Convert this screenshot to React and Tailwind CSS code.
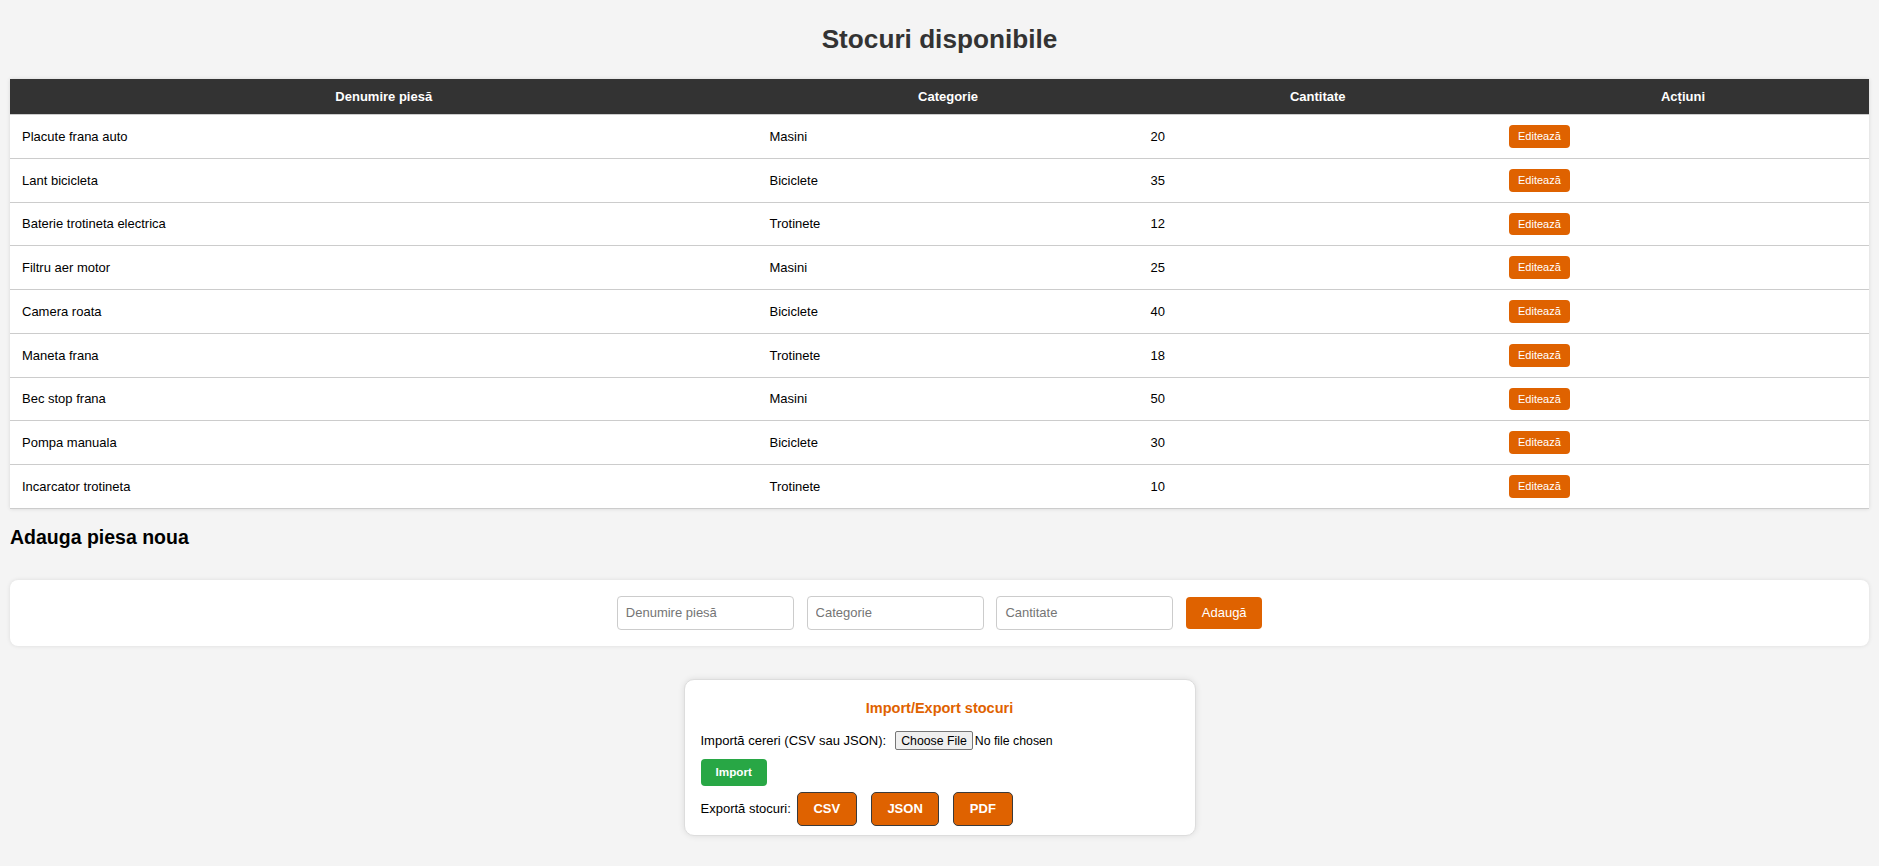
import React from 'react';

const stocuri = [
  { nume: 'Placute frana auto', categorie: 'Masini', cantitate: 20 },
  { nume: 'Lant bicicleta', categorie: 'Biciclete', cantitate: 35 },
  { nume: 'Baterie trotineta electrica', categorie: 'Trotinete', cantitate: 12 },
  { nume: 'Filtru aer motor', categorie: 'Masini', cantitate: 25 },
  { nume: 'Camera roata', categorie: 'Biciclete', cantitate: 40 },
  { nume: 'Maneta frana', categorie: 'Trotinete', cantitate: 18 },
  { nume: 'Bec stop frana', categorie: 'Masini', cantitate: 50 },
  { nume: 'Pompa manuala', categorie: 'Biciclete', cantitate: 30 },
  { nume: 'Incarcator trotineta', categorie: 'Trotinete', cantitate: 10 },
];

const App = () => {
  return (
    <div className="min-h-screen bg-[#f4f4f4] px-[10px] pb-[30px] font-['Liberation_Sans',Arial,sans-serif] text-black">
      {/* Titlu */}
      <h2 className="pt-[24px] text-center text-[26.2px] leading-[30px] font-bold text-[#333]">Stocuri disponibile</h2>

      {/* Tabel stocuri */}
      <table className="mt-[25px] w-full table-fixed bg-white text-[13px] shadow-[0_0_4px_rgba(0,0,0,0.12)]">
        <colgroup>
          <col className="w-[747.5px]" />
          <col className="w-[381px]" />
          <col className="w-[358.5px]" />
          <col />
        </colgroup>
        <thead>
          <tr className="bg-[#333] text-white">
            <th className="border-b border-[#ccc] py-[10px] leading-[15px] font-bold">Denumire piesă</th>
            <th className="border-b border-[#ccc] py-[10px] leading-[15px] font-bold">Categorie</th>
            <th className="border-b border-[#ccc] py-[10px] leading-[15px] font-bold">Cantitate</th>
            <th className="border-b border-[#ccc] py-[10px] leading-[15px] font-bold">Acțiuni</th>
          </tr>
        </thead>
        <tbody>
          {stocuri.map(s => (
            <tr key={s.nume} className="border-b border-[#ccc]">
              <td className="px-[12px] py-[10px] leading-[15px]">{s.nume}</td>
              <td className="px-[12px] py-[10px] leading-[15px]">{s.categorie}</td>
              <td className="px-[12px] py-[10px] leading-[15px]">{s.cantitate}</td>
              <td className="px-[12px] py-[10px]">
                <button className="block rounded-[4px] bg-[#df6200] px-[9px] py-[5px] text-[11px] leading-[12.75px] text-white">Editează</button>
              </td>
            </tr>
          ))}
        </tbody>
      </table>

      {/* Formular adaugare */}
      <h3 className="mt-[17px] text-[19.5px] leading-[22px] font-bold">Adauga piesa noua</h3>
      <div className="mt-[32px] flex items-center justify-center gap-[12.8px] rounded-[8px] bg-white py-[16px] shadow-[0_0_4px_rgba(0,0,0,0.1)]">
        <input placeholder="Denumire piesă" className="h-[34px] w-[177px] rounded-[4px] border border-[#ccc] px-[8px] text-[13px] placeholder:text-[#757575]" />
        <input placeholder="Categorie" className="h-[34px] w-[177px] rounded-[4px] border border-[#ccc] px-[8px] text-[13px] placeholder:text-[#757575]" />
        <input placeholder="Cantitate" className="h-[34px] w-[177px] rounded-[4px] border border-[#ccc] px-[8px] text-[13px] placeholder:text-[#757575]" />
        <button className="h-[32px] w-[76px] rounded-[4px] bg-[#df6200] text-[13px] text-white">Adaugă</button>
      </div>

      {/* Import / Export */}
      <div className="mx-auto mt-[33px] w-[512px] rounded-[10px] border border-[#ddd] bg-white px-[16px] pt-[20px] pb-[9px] text-[13px] shadow-[0_0_6px_rgba(0,0,0,0.1)]">
        <h3 className="text-center text-[14.5px] leading-[17px] font-bold text-[#df6200]">Import/Export stocuri</h3>
        <div className="mt-[13.5px] flex h-[20px] items-center">
          <label className="mr-[9px]">Importă cereri (CSV sau JSON):</label>
          <input type="file" className="text-[12.3px] file:mr-[2px] file:h-[19px] file:rounded-[2px] file:border file:border-[#767676] file:bg-[#efefef] file:px-[5px] file:text-[12.3px]" />
        </div>
        <button className="mt-[8.5px] block h-[27px] rounded-[4px] bg-[#28a745] px-[15px] text-[11.7px] font-bold text-white">Import</button>
        <div className="mt-[6px] flex items-center">
          <span className="mr-[6px]">Exportă stocuri:</span>
          <button className="h-[34px] w-[60px] rounded-[5px] border border-[#3a3a3a] bg-[#df6200] font-bold text-white">CSV</button>
          <button className="ml-[14px] h-[34px] w-[68.5px] rounded-[5px] border border-[#3a3a3a] bg-[#df6200] font-bold text-white">JSON</button>
          <button className="ml-[13.5px] h-[34px] w-[60px] rounded-[5px] border border-[#3a3a3a] bg-[#df6200] font-bold text-white">PDF</button>
        </div>
      </div>
    </div>
  );
};

export default App;
